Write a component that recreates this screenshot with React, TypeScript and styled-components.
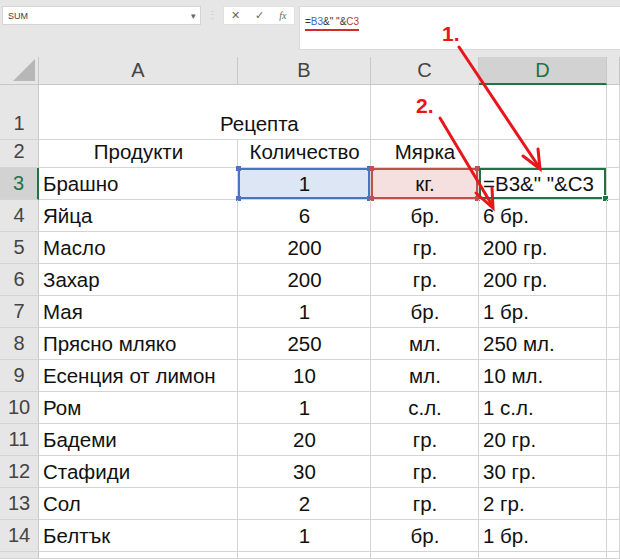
import React from "react";
import styled, { createGlobalStyle, css } from "styled-components";

const GlobalStyle = createGlobalStyle`
  html, body {
    margin: 0;
    padding: 0;
    background: #e6e6e6;
  }
`;

type Tone = "blue" | "red" | "green" | undefined;
type Align = "left" | "center";

interface RowData {
  n: number;
  a: string;
  b: string;
  c: string;
  d: string;
}

const rows: RowData[] = [
  { n: 4, a: "Яйца", b: "6", c: "бр.", d: "6 бр." },
  { n: 5, a: "Масло", b: "200", c: "гр.", d: "200 гр." },
  { n: 6, a: "Захар", b: "200", c: "гр.", d: "200 гр." },
  { n: 7, a: "Мая", b: "1", c: "бр.", d: "1 бр." },
  { n: 8, a: "Прясно мляко", b: "250", c: "мл.", d: "250 мл." },
  { n: 9, a: "Есенция от лимон", b: "10", c: "мл.", d: "10 мл." },
  { n: 10, a: "Ром", b: "1", c: "с.л.", d: "1 с.л." },
  { n: 11, a: "Бадеми", b: "20", c: "гр.", d: "20 гр." },
  { n: 12, a: "Стафиди", b: "30", c: "гр.", d: "30 гр." },
  { n: 13, a: "Сол", b: "2", c: "гр.", d: "2 гр." },
  { n: 14, a: "Белтък", b: "1", c: "бр.", d: "1 бр." },
];

export default function App() {
  return (
    <Page>
      <GlobalStyle />
      <Toolbar>
        <NameBox>
          <span>SUM</span>
          <Caret>▾</Caret>
        </NameBox>
        <Grip>⋮</Grip>
        <ActionBox>
          <Action>✕</Action>
          <Action>✓</Action>
          <Action $italic>fx</Action>
        </ActionBox>
        <FormulaBar>
          <FormulaText>
            =<Ref $tone="blue">B3</Ref>&amp;" "&amp;<Ref $tone="red">C3</Ref>
          </FormulaText>
        </FormulaBar>
      </Toolbar>

      <Sheet>
        <Corner>
          <CornerTriangle />
        </Corner>
        <ColHead>A</ColHead>
        <ColHead>B</ColHead>
        <ColHead>C</ColHead>
        <ColHead $active>D</ColHead>
        <ColHead />

        <RowHead>1</RowHead>
        <Cell $span={2}>
          <TitleText>Рецепта</TitleText>
        </Cell>
        <Cell />
        <Cell />
        <Cell />

        <RowHead>2</RowHead>
        <Cell $align="center">Продукти</Cell>
        <Cell $align="center">Количество</Cell>
        <Cell $align="center">Мярка</Cell>
        <Cell />
        <Cell />

        <RowHead $active>3</RowHead>
        <Cell>Брашно</Cell>
        <Cell $align="center" $tone="blue">
          1
          <Handles $tone="blue" />
        </Cell>
        <Cell $align="center" $tone="red">
          кг.
          <Handles $tone="red" />
        </Cell>
        <Cell $tone="green">
          =B3&amp;" "&amp;C3
          <FillHandle />
        </Cell>
        <Cell />

        {rows.map((r) => (
          <React.Fragment key={r.n}>
            <RowHead>{r.n}</RowHead>
            <Cell>{r.a}</Cell>
            <Cell $align="center">{r.b}</Cell>
            <Cell $align="center">{r.c}</Cell>
            <Cell>{r.d}</Cell>
            <Cell />
          </React.Fragment>
        ))}

        <RowHead />
        <Cell />
        <Cell />
        <Cell />
        <Cell />
        <Cell />
      </Sheet>

      <Callout $x={442} $y={22}>1.</Callout>
      <Callout $x={416} $y={94}>2.</Callout>
      <Arrows viewBox="0 0 620 559" width="620" height="559">
        <g stroke="#e8151b" strokeWidth="3" strokeLinecap="round" fill="none">
          <line x1="459" y1="47" x2="539" y2="167" />
          <polyline points="523,156 540,169 538,149" />
          <line x1="440" y1="118" x2="492" y2="205" />
          <polyline points="476,193 493,208 492,188" />
        </g>
      </Arrows>
    </Page>
  );
}

const Page = styled.div`
  position: relative;
  width: 620px;
  height: 559px;
  overflow: hidden;
  background: #e6e6e6;
  font-family: "Liberation Sans", Arial, sans-serif;
`;

const Toolbar = styled.div`
  display: flex;
  align-items: flex-start;
  height: 57px;
  padding: 6px 0 0 2px;
  box-sizing: border-box;
`;

const NameBox = styled.div`
  display: flex;
  align-items: center;
  justify-content: space-between;
  width: 199px;
  height: 19px;
  padding: 0 4px 0 5px;
  box-sizing: border-box;
  background: #fff;
  border: 1px solid #d4d4d4;
  font-size: 9px;
  color: #444;
`;

const Caret = styled.span`
  font-size: 9px;
  color: #666;
`;

const Grip = styled.div`
  width: 22px;
  text-align: center;
  font-size: 11px;
  line-height: 19px;
  color: #c4c4c4;
`;

const ActionBox = styled.div`
  display: flex;
  align-items: center;
  justify-content: space-around;
  width: 72px;
  height: 19px;
  background: #fff;
  border: 1px solid #e0e0e0;
  box-sizing: border-box;
`;

const Action = styled.span<{ $italic?: boolean }>`
  font-size: ${(p) => (p.$italic ? "10px" : "11px")};
  color: #666;
  font-family: ${(p) => (p.$italic ? '"Liberation Serif", serif' : "inherit")};
  font-style: ${(p) => (p.$italic ? "italic" : "normal")};
`;

const FormulaBar = styled.div`
  flex: 1;
  height: 44px;
  margin-left: 4px;
  background: #fff;
  border: 1px solid #d9d9d9;
  border-right: none;
  box-sizing: border-box;
  padding: 4px 0 0 5px;
`;

const FormulaText = styled.span`
  display: inline-block;
  font-size: 10px;
  color: #333;
  padding-bottom: 2px;
  border-bottom: 2px solid #d42a2a;
`;

const Ref = styled.span<{ $tone: "blue" | "red" }>`
  color: ${(p) => (p.$tone === "blue" ? "#3a6bc6" : "#c0392b")};
`;

const Sheet = styled.div`
  display: grid;
  grid-template-columns: 39px 199px 133px 108px 128px 1fr;
  grid-template-rows: 28px 55px 28px repeat(12, 32px) 1fr;
  height: 502px;
  background: #fff;
`;

const Corner = styled.div`
  position: relative;
  background: #e6e6e6;
  border-right: 1px solid #c8c8c8;
  border-bottom: 1px solid #c8c8c8;
`;

const CornerTriangle = styled.div`
  position: absolute;
  right: 3px;
  bottom: 3px;
  width: 0;
  height: 0;
  border-left: 22px solid transparent;
  border-bottom: 22px solid #b7b7b7;
`;

const ColHead = styled.div<{ $active?: boolean }>`
  display: flex;
  align-items: center;
  justify-content: center;
  background: ${(p) => (p.$active ? "#d2d2d2" : "#e6e6e6")};
  color: ${(p) => (p.$active ? "#217346" : "#444")};
  border-right: 1px solid #c8c8c8;
  border-bottom: ${(p) => (p.$active ? "2px solid #217346" : "1px solid #c8c8c8")};
  font-size: 20px;
`;

const RowHead = styled.div<{ $active?: boolean }>`
  display: flex;
  align-items: flex-end;
  justify-content: center;
  padding-bottom: 4px;
  box-sizing: border-box;
  background: ${(p) => (p.$active ? "#d2d2d2" : "#e6e6e6")};
  color: ${(p) => (p.$active ? "#217346" : "#444")};
  border-right: ${(p) => (p.$active ? "2px solid #217346" : "1px solid #c8c8c8")};
  border-bottom: 1px solid #d4d4d4;
  font-size: 20px;
`;

const toneStyles = {
  blue: css`
    background: #dce6f4;
    box-shadow: inset 0 0 0 2px #4a74c2;
  `,
  red: css`
    background: #f6dfdf;
    box-shadow: inset 0 0 0 2px #c0504d;
  `,
  green: css`
    background: #fff;
    box-shadow: inset 0 0 0 2px #217346;
  `,
};

const Cell = styled.div<{ $align?: Align; $tone?: Tone; $span?: number }>`
  position: relative;
  display: flex;
  align-items: flex-end;
  justify-content: ${(p) => (p.$align === "center" ? "center" : "flex-start")};
  grid-column: ${(p) => (p.$span ? `span ${p.$span}` : "auto")};
  padding: 0 3px 3px 4px;
  box-sizing: border-box;
  border-right: 1px solid #d4d4d4;
  border-bottom: 1px solid #d4d4d4;
  font-size: 20.5px;
  color: #111;
  white-space: nowrap;
  ${(p) => (p.$tone ? toneStyles[p.$tone] : "")}
`;

const TitleText = styled.span`
  margin-left: 177px;
`;

const Handles = styled.span<{ $tone: "blue" | "red" }>`
  position: absolute;
  inset: -2px;
  pointer-events: none;
  background:
    linear-gradient(${(p) => (p.$tone === "blue" ? "#4a74c2" : "#c0504d")}, ${(p) =>
      p.$tone === "blue" ? "#4a74c2" : "#c0504d"}) left top / 5px 5px no-repeat,
    linear-gradient(${(p) => (p.$tone === "blue" ? "#4a74c2" : "#c0504d")}, ${(p) =>
      p.$tone === "blue" ? "#4a74c2" : "#c0504d"}) right top / 5px 5px no-repeat,
    linear-gradient(${(p) => (p.$tone === "blue" ? "#4a74c2" : "#c0504d")}, ${(p) =>
      p.$tone === "blue" ? "#4a74c2" : "#c0504d"}) left bottom / 5px 5px no-repeat,
    linear-gradient(${(p) => (p.$tone === "blue" ? "#4a74c2" : "#c0504d")}, ${(p) =>
      p.$tone === "blue" ? "#4a74c2" : "#c0504d"}) right bottom / 5px 5px no-repeat;
`;

const FillHandle = styled.span`
  position: absolute;
  right: -3px;
  bottom: -3px;
  width: 5px;
  height: 5px;
  background: #217346;
  border: 1px solid #fff;
`;

const Callout = styled.div<{ $x: number; $y: number }>`
  position: absolute;
  left: ${(p) => p.$x}px;
  top: ${(p) => p.$y}px;
  font-size: 21px;
  font-weight: bold;
  color: #e8151b;
  pointer-events: none;
`;

const Arrows = styled.svg`
  position: absolute;
  left: 0;
  top: 0;
  pointer-events: none;
`;
